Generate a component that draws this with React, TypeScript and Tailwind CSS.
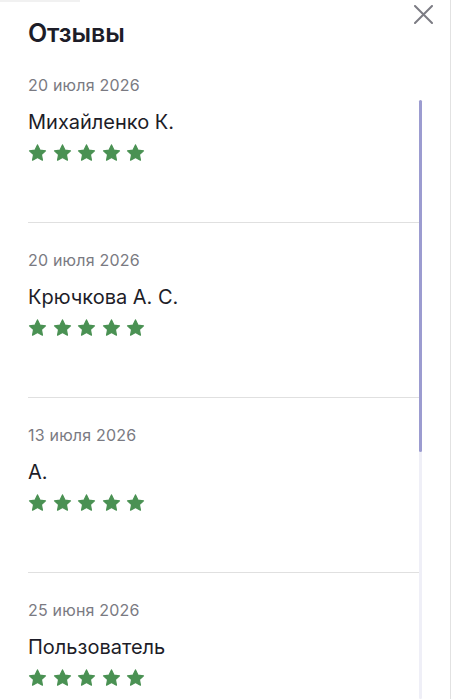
import React from "react";

const reviews = [
  { date: "20 июля 2026", name: "Михайленко К." },
  { date: "20 июля 2026", name: "Крючкова А. С." },
  { date: "13 июля 2026", name: "А." },
  { date: "25 июня 2026", name: "Пользователь" },
];

function Star() {
  return (
    <svg width="19" height="18" viewBox="0 0 24 23" className="block">
      <path
        d="M12 1.2l3.1 6.6 7.1.9-5.2 4.9 1.3 7.1L12 17.2l-6.3 3.5 1.3-7.1-5.2-4.9 7.1-.9z"
        fill="#4a9153"
        stroke="#4a9153"
        strokeWidth="1.6"
        strokeLinejoin="round"
      />
    </svg>
  );
}

export default function App() {
  return (
    <div
      className="relative w-[452px] h-[699px] overflow-hidden bg-white flex"
      style={{ fontFamily: "Inter, 'Noto Sans', sans-serif" }}
    >
      <div className="absolute top-0 left-0 w-[80px] h-[2px] bg-[#f1f1f1]" />
      <button className="absolute top-[5px] right-[19px] w-[19px] h-[19px]">
        <svg width="19" height="19" viewBox="0 0 19 19">
          <path d="M1 1L18 18M18 1L1 18" stroke="#7c7c84" strokeWidth="2" strokeLinecap="round" />
        </svg>
      </button>

      <div className="w-[419px] shrink-0 pl-[28px]">
        <h1 className="pt-[18px] h-[48px] text-[25px] leading-[30px] font-semibold text-[#1d1d28] tracking-[-0.1px]">
          Отзывы
        </h1>
        {reviews.map((r, i) => (
          <div key={i} className="h-[175px] border-b border-[#e0e0e0] pt-[27px] flex flex-col">
            <div className="text-[16px] leading-[20px] text-[#7a7a82] tracking-[0.2px]">{r.date}</div>
            <div className="mt-[14px] text-[20px] leading-[26px] text-[#1d1d28]">{r.name}</div>
            <div className="mt-[9px] flex gap-[5.5px]">
              {[0, 1, 2, 3, 4].map((s) => (
                <Star key={s} />
              ))}
            </div>
          </div>
        ))}
      </div>

      <div className="w-[3px] shrink-0 pt-[100px] flex flex-col">
        <div className="flex-1 rounded-full bg-[#efeff7] flex flex-col">
          <div className="h-[352px] rounded-full bg-[#9c9cd0]" />
        </div>
      </div>

      <div className="flex-1" />
      <div className="w-px bg-[#e2e2e2]" />
      <div className="w-px" />
    </div>
  );
}
